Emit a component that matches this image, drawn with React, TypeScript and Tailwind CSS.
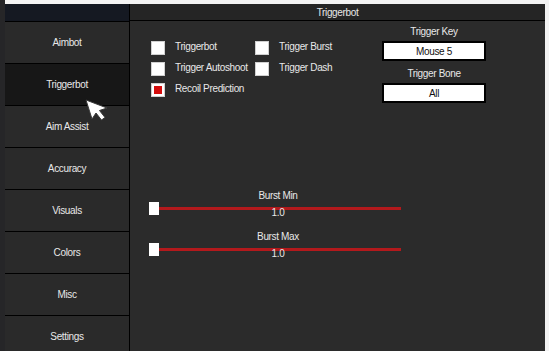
import React from 'react';

const tabs = ['Aimbot', 'Triggerbot', 'Aim Assist', 'Accuracy', 'Visuals', 'Colors', 'Misc', 'Settings'];

function Check({ label, on = false }: { label: string; on?: boolean }) {
  return (
    <div className="flex h-[21px] items-start">
      <div className="flex h-[14px] w-[14px] shrink-0 items-center justify-center border border-[#d0d0d0] bg-white">
        {on && <div className="h-[8px] w-[8px] bg-[#d40d0d]" />}
      </div>
      <span className="ml-[10px] whitespace-nowrap leading-[11px]">{label}</span>
    </div>
  );
}

function Slider({ label, value }: { label: string; value: string }) {
  return (
    <div className="h-[41px] w-[252px]">
      <div className="h-[12px] pl-[6px] text-center leading-[12px]">{label}</div>
      <div className="relative h-[29px]">
        <div className="absolute left-[5px] right-0 top-[5px] h-[3px] bg-[#b3191c]" />
        <div className="absolute left-0 top-0 h-[13px] w-[10px] bg-white" />
        <div className="absolute left-[6px] right-0 top-[5px] text-center leading-[12px]">{value}</div>
      </div>
    </div>
  );
}

function Cursor() {
  return (
    <svg className="absolute left-[84px] top-[98px]" width="26" height="24" viewBox="0 0 26 24">
      <path d="M2 2 L23 10 L15.5 12.5 L21 19.5 L17.5 22 L12 15 L8 21 Z" fill="#ffffff" stroke="#3a3a3a" strokeWidth="1" strokeLinejoin="round" />
    </svg>
  );
}

export default function App() {
  return (
    <div
      className="relative flex h-[351px] w-[549px] overflow-hidden bg-[#f2f2f2] text-[10px] tracking-[-0.35px] text-[#e8e8e8]"
      style={{ fontFamily: '"Liberation Sans", Arial, sans-serif' }}
    >
      <div className="w-[5px] shrink-0 bg-[#262628]" />
      <div className="flex w-[540px] shrink-0 flex-col">
        <div className="h-[4px] shrink-0 bg-[#f4f4f4]" />
        <div className="flex min-h-0 flex-1 overflow-hidden bg-[#2b2b2b]">
          {/* sidebar */}
          <div className="flex w-[125px] shrink-0 flex-col overflow-hidden border-r border-black">
            <div className="h-[17px] shrink-0 bg-[#151922]" />
            {tabs.map((t) => (
              <div
                key={t}
                className={`flex h-[42px] shrink-0 items-center justify-center border-t border-black ${
                  t === 'Triggerbot' ? 'bg-[#171717]' : 'bg-[#2a2a2a]'
                }`}
              >
                {t}
              </div>
            ))}
          </div>
          {/* content */}
          <div className="flex flex-1 flex-col">
            <div className="flex h-[17px] shrink-0 items-center justify-center border-b border-black bg-[#252525]">
              Triggerbot
            </div>
            <div className="flex-1 bg-[#2b2b2b]">
              <div className="flex items-start pl-[21px] pt-[20px]">
                <div className="w-[104px]">
                  <Check label="Triggerbot" />
                  <Check label="Trigger Autoshoot" />
                  <Check label="Recoil Prediction" on />
                </div>
                <div className="w-[104px]">
                  <Check label="Trigger Burst" />
                  <Check label="Trigger Dash" />
                </div>
                <div className="ml-auto mr-[59px] -mt-[15px] flex w-[104px] flex-col text-center">
                  <div className="h-[12px] leading-[12px]">Trigger Key</div>
                  <div className="mt-[3px] flex h-[20px] items-center justify-center border-2 border-black bg-white text-[#111]">
                    Mouse 5
                  </div>
                  <div className="mt-[7px] h-[12px] leading-[12px]">Trigger Bone</div>
                  <div className="mt-[3px] flex h-[20px] items-center justify-center border-2 border-black bg-white text-[#111]">
                    All
                  </div>
                </div>
              </div>
              <div className="ml-[19px] mt-[86px]">
                <Slider label="Burst Min" value="1.0" />
                <Slider label="Burst Max" value="1.0" />
              </div>
            </div>
          </div>
        </div>
      </div>
      <div className="flex-1 bg-[#f2f2f2]" />
      <Cursor />
    </div>
  );
}
